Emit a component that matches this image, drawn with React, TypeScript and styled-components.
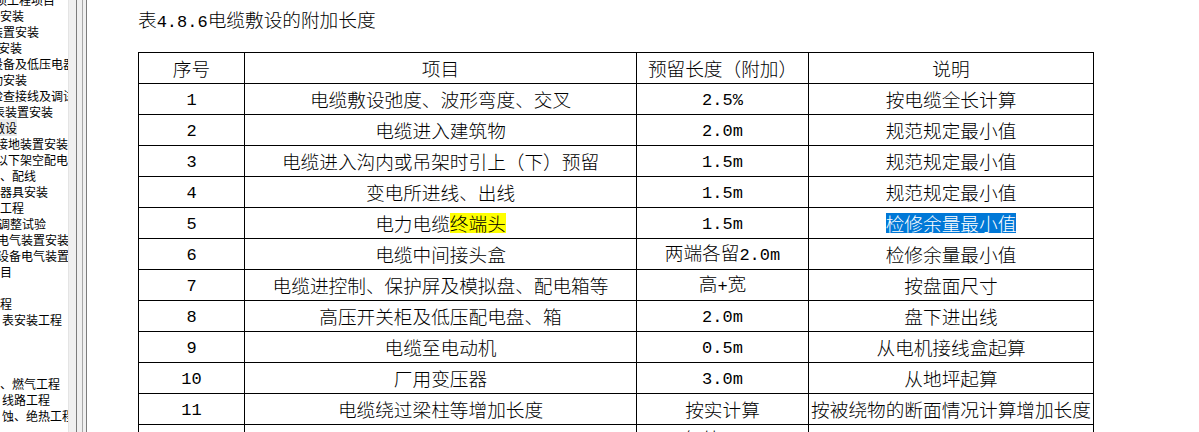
import React from "react";
import styled, { createGlobalStyle } from "styled-components";

const GlobalStyle = createGlobalStyle`
  html, body {
    margin: 0;
    padding: 0;
    overflow: hidden;
    background: #ffffff;
  }
  body {
    font-family: "Noto Sans CJK SC", "Liberation Sans", sans-serif;
    color: #000;
  }
`;

const Frame = styled.div`
  display: flex;
  width: 1199px;
  height: 432px;
  overflow: hidden;
  background: #fff;
`;

const Sidebar = styled.nav`
  width: 68px;
  flex: 0 0 68px;
  overflow: hidden;
  background: #fff;
`;

const NavList = styled.div`
  margin-top: -8px;
  display: flex;
  flex-direction: column;
`;

const NavItem = styled.div<{ $offset: number; $selected?: boolean }>`
  height: 16px;
  line-height: 16px;
  font-size: 12px;
  white-space: nowrap;
  margin-left: ${(p) => p.$offset}px;
  color: #000;
  span {
    background: ${(p) => (p.$selected ? "#ececec" : "transparent")};
  }
`;

const Splitter = styled.div`
  width: 19px;
  flex: 0 0 19px;
  background: linear-gradient(
    to right,
    #e4e4e4 0px,
    #e4e4e4 1px,
    #f0f0f0 1px,
    #f0f0f0 8px,
    #7c7c7c 8px,
    #7c7c7c 9px,
    #f0f0f0 9px,
    #f0f0f0 14px,
    #a8a8a8 14px,
    #a8a8a8 15px,
    #f0f0f0 15px,
    #f0f0f0 18px,
    #7c7c7c 18px,
    #7c7c7c 19px
  );
`;

const Main = styled.main`
  flex: 1;
  padding: 8px 0 0 51px;
  background: #fff;
`;

const Title = styled.h1`
  margin: 0 0 22px 0;
  height: 22px;
  line-height: 22px;
  font-size: 18.67px;
  font-weight: 300;
  white-space: nowrap;
`;

const Table = styled.table`
  border-collapse: collapse;
  table-layout: fixed;
  width: 955px;
`;

const Cell = styled.td`
  border: 1px solid #000;
  height: 30px;
  padding: 0;
  text-align: center;
  vertical-align: middle;
  font-size: 18.67px;
  line-height: 20px;
  white-space: nowrap;
  overflow: hidden;
  font-weight: 300;
`;

const Latin = styled.span`
  font-family: "Liberation Mono", monospace;
  font-size: 17px;
  font-weight: 400;
`;

const Highlight = styled.span`
  display: inline-block;
  height: 20px;
  line-height: 20px;
  background: #ffff00;
`;

const Selected = styled.span`
  display: inline-block;
  height: 20px;
  line-height: 20px;
  background: #0078d7;
  color: #fff;
`;

const renderText = (s: string) =>
  s.split(/([\x20-\x7e]+)/).map((part, i) =>
    /^[\x20-\x7e]+$/.test(part) ? <Latin key={i}>{part}</Latin> : <React.Fragment key={i}>{part}</React.Fragment>
  );

const navItems: { t: string; o: number; sel?: boolean }[] = [
  { t: "项工程项目", o: -5 },
  { t: "安装", o: 0 },
  { t: "装置安装", o: -9 },
  { t: "安装", o: -2 },
  { t: "设备及低压电器", o: -9 },
  { t: "动安装", o: -9 },
  { t: "检查接线及调试", o: -9 },
  { t: "表装置安装", o: -7 },
  { t: "敷设", o: -7, sel: true },
  { t: "接地装置安装", o: -4 },
  { t: "以下架空配电", o: -4 },
  { t: "、配线", o: 0 },
  { t: "器具安装", o: 0 },
  { t: "工程", o: 0 },
  { t: "调整试验", o: -2 },
  { t: "电气装置安装", o: -3 },
  { t: "设备电气装置", o: -3 },
  { t: "目", o: 0 },
  { t: "", o: 0 },
  { t: "程", o: 0 },
  { t: "表安装工程", o: 2 },
  { t: "", o: 0 },
  { t: "", o: 0 },
  { t: "", o: 0 },
  { t: "、燃气工程", o: 0 },
  { t: "线路工程", o: 2 },
  { t: "蚀、绝热工程", o: 2 },
];

type Row = { n: string; item: React.ReactNode; len: string; note: React.ReactNode };

const rows: Row[] = [
  { n: "1", item: "电缆敷设弛度、波形弯度、交叉", len: "2.5%", note: "按电缆全长计算" },
  { n: "2", item: "电缆进入建筑物", len: "2.0m", note: "规范规定最小值" },
  { n: "3", item: "电缆进入沟内或吊架时引上（下）预留", len: "1.5m", note: "规范规定最小值" },
  { n: "4", item: "变电所进线、出线", len: "1.5m", note: "规范规定最小值" },
  {
    n: "5",
    item: (
      <>
        电力电缆<Highlight>终端头</Highlight>
      </>
    ),
    len: "1.5m",
    note: <Selected>检修余量最小值</Selected>,
  },
  { n: "6", item: "电缆中间接头盒", len: "两端各留2.0m", note: "检修余量最小值" },
  { n: "7", item: "电缆进控制、保护屏及模拟盘、配电箱等", len: "高+宽", note: "按盘面尺寸" },
  { n: "8", item: "高压开关柜及低压配电盘、箱", len: "2.0m", note: "盘下进出线" },
  { n: "9", item: "电缆至电动机", len: "0.5m", note: "从电机接线盒起算" },
  { n: "10", item: "厂用变压器", len: "3.0m", note: "从地坪起算" },
  { n: "11", item: "电缆绕过梁柱等增加长度", len: "按实计算", note: "按被绕物的断面情况计算增加长度" },
  { n: "12", item: "电梯电缆与电缆架固定点", len: "每处0.5m", note: "规范最小值" },
];

const show = (v: React.ReactNode) => (typeof v === "string" ? renderText(v) : v);

export default function App() {
  return (
    <>
      <GlobalStyle />
      <Frame>
        <Sidebar>
          <NavList>
            {navItems.map((it, i) => (
              <NavItem key={i} $offset={it.o} $selected={it.sel}>
                <span>{it.t || "\u00a0"}</span>
              </NavItem>
            ))}
          </NavList>
        </Sidebar>
        <Splitter />
        <Main>
          <Title>{renderText("表4.8.6电缆敷设的附加长度")}</Title>
          <Table>
            <colgroup>
              <col style={{ width: 106 }} />
              <col style={{ width: 392 }} />
              <col style={{ width: 172 }} />
              <col style={{ width: 285 }} />
            </colgroup>
            <thead>
              <tr>
                <Cell as="th">序号</Cell>
                <Cell as="th">项目</Cell>
                <Cell as="th">预留长度（附加）</Cell>
                <Cell as="th">说明</Cell>
              </tr>
            </thead>
            <tbody>
              {rows.map((r) => (
                <tr key={r.n}>
                  <Cell>{renderText(r.n)}</Cell>
                  <Cell>{show(r.item)}</Cell>
                  <Cell>{show(r.len)}</Cell>
                  <Cell>{show(r.note)}</Cell>
                </tr>
              ))}
            </tbody>
          </Table>
        </Main>
      </Frame>
    </>
  );
}
